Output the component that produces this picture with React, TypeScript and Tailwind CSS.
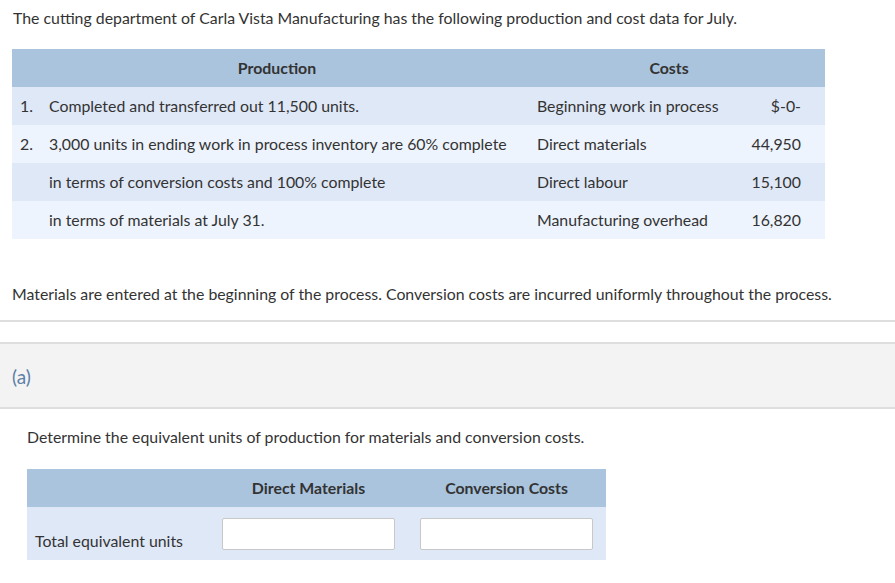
export default function App() {
  const rows = [
    { n: '1.', text: 'Completed and transferred out 11,500 units.', label: 'Beginning work in process', amount: '$-0-' },
    { n: '2.', text: '3,000 units in ending work in process inventory are 60% complete', label: 'Direct materials', amount: '44,950' },
    { n: '', text: 'in terms of conversion costs and 100% complete', label: 'Direct labour', amount: '15,100' },
    { n: '', text: 'in terms of materials at July 31.', label: 'Manufacturing overhead', amount: '16,820' },
  ];

  return (
    <div className="min-h-screen bg-white font-['Lato','Noto_Sans',sans-serif] text-[15.85px] text-[#333]">
      <div className="px-3 pb-[15px]">
        <p className="pt-[7px] leading-[22px] pl-px">
          The cutting department of Carla Vista Manufacturing has the following production and cost data for July.
        </p>

        <div className="mt-[20px] w-[813px] grid grid-cols-[30px_488px_215px_80px]">
          <div className="col-span-2 h-[38px] flex items-center justify-center pl-[12px] bg-[#aac4de] font-bold">
            Production
          </div>
          <div className="col-span-2 h-[38px] flex items-center justify-center pr-[17px] bg-[#aac4de] font-bold">
            Costs
          </div>
          {rows.map((r, i) => {
            const bg = i % 2 === 0 ? 'bg-[#dfe8f7]' : 'bg-[#eef4fd]';
            return (
              <div key={i} className="contents">
                <div className={`h-[38px] flex items-center pl-2 ${bg}`}>{r.n}</div>
                <div className={`h-[38px] flex items-center pl-[7px] ${bg}`}>{r.text}</div>
                <div className={`h-[38px] flex items-center pl-[7px] ${bg}`}>{r.label}</div>
                <div className={`h-[38px] flex items-center justify-end pr-[24px] ${bg}`}>{r.amount}</div>
              </div>
            );
          })}
        </div>

        <p className="mt-[44px] leading-[22px]">
          Materials are entered at the beginning of the process. Conversion costs are incurred uniformly throughout the process.
        </p>
      </div>

      <div className="border-t-2 border-[#dedede] h-[22px]" />

      <div className="border-t-2 border-b-2 border-[#dedede] bg-[#f3f3f3] h-[67px] flex items-center px-3 pt-[3px]">
        <span className="text-[19px] text-[#5b7fa8]">(a)</span>
      </div>

      <div className="px-[27px]">
        <p className="mt-[17px] leading-[22px]">
          Determine the equivalent units of production for materials and conversion costs.
        </p>

        <div className="mt-[21px] w-[579px] grid grid-cols-[183px_197px_199px]">
          <div className="h-[38px] bg-[#aac4de]" />
          <div className="h-[38px] flex items-center justify-center bg-[#aac4de] font-bold">Direct Materials</div>
          <div className="h-[38px] flex items-center justify-center bg-[#aac4de] font-bold">Conversion Costs</div>

          <div className="h-[53px] flex items-end pb-[8px] pl-2 bg-[#dfe8f7] leading-[22px]">Total equivalent units</div>
          <div className="h-[53px] flex items-center justify-center bg-[#dfe8f7]">
            <input className="w-[173px] h-[32px] bg-white border border-[#c8c8c8] rounded-[2px] px-2 outline-none" />
          </div>
          <div className="h-[53px] flex items-center justify-center bg-[#dfe8f7]">
            <input className="w-[173px] h-[32px] bg-white border border-[#c8c8c8] rounded-[2px] px-2 outline-none" />
          </div>
        </div>
      </div>
    </div>
  );
}
